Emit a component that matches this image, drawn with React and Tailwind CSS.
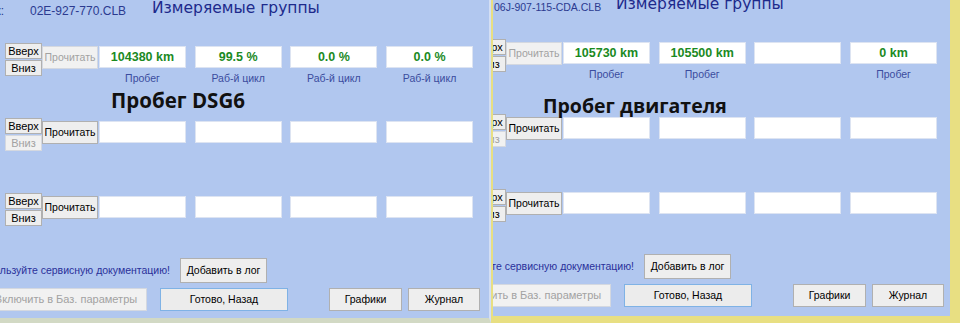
import clsx from "clsx";

const sans = "font-['Liberation_Sans',Arial,sans-serif]";

const panels = {
  dsg: {
    file: "02E-927-770.CLB",
    fileSize: "text-[12px]",
    note: "Пробег DSG6",
    values: ["104380 km", "99.5 %", "0.0 %", "0.0 %"],
    labels: ["Пробег", "Раб-й цикл", "Раб-й цикл", "Раб-й цикл"],
  },
  engine: {
    file: "06J-907-115-CDA.CLB",
    fileSize: "text-[10.5px]",
    note: "Пробег двигателя",
    values: ["105730 km", "105500 km", "", "0 km"],
    labels: ["Пробег", "Пробег", "", "Пробег"],
  },
};

function Btn({ children, disabled, focus, className }) {
  return (
    <button
      type="button"
      className={clsx(
        "flex shrink-0 items-center justify-center overflow-hidden whitespace-nowrap border text-[10.5px] leading-none",
        disabled
          ? "border-[#d4d8e0] bg-[#f1f1f1] text-[#a2a2a2]"
          : focus
            ? "border-[#7fb2e5] bg-[#ececec] text-black"
            : "border-[#b0b0b0] bg-[#eeeeee] text-black",
        className
      )}
    >
      {children}
    </button>
  );
}

function Group({ values = [], labels = [], readDisabled, downDisabled, className }) {
  return (
    <div className={clsx("flex", className)}>
      <div className="ml-[45px] flex w-[37px] flex-col">
        <Btn className="h-[16px] w-[37px] text-[11px]">Вверх</Btn>
        <Btn disabled={downDisabled} className="mt-[1px] h-[16px] w-[37px] text-[11px]">
          Вниз
        </Btn>
      </div>
      <Btn disabled={readDisabled} className="mt-[3px] h-[23px] w-[56px]">
        Прочитать
      </Btn>
      <div className="ml-[1px] mt-[3px] flex gap-x-[8.7px]">
        {[0, 1, 2, 3].map((i) => (
          <div key={i} className="flex w-[87px] flex-col items-center">
            <div className="flex h-[22px] w-[87px] items-center justify-center border border-[#dde4f2] bg-white text-[12.5px] font-bold text-[#1b8a1f]">
              {values[i]}
            </div>
            {labels[i] ? (
              <span className="mt-[4px] text-[10.5px] leading-[12px] text-[#3b4c9e]">{labels[i]}</span>
            ) : null}
          </div>
        ))}
      </div>
    </div>
  );
}

function Window({ data, className }) {
  return (
    <div className={clsx("w-[560px] shrink-0", sans, className)}>
      <div className="flex h-[43px] items-start">
        <div className="flex w-[44px] shrink-0 justify-end">
          <span className="mt-[5px] whitespace-nowrap text-[12px] leading-[12px] text-[#2b3a8f]">
            Файл меток:
          </span>
        </div>
        <span
          className={clsx(
            "ml-[26px] mt-[5px] w-[122px] shrink-0 whitespace-nowrap leading-[12px] text-[#2b3a8f]",
            data.fileSize
          )}
        >
          {data.file}
        </span>
        <span className="font-['DejaVu_Sans',sans-serif] text-[15.5px] leading-[16px] text-[#1d2a8c]">
          Измеряемые группы
        </span>
      </div>

      <Group className="h-[75px]" values={data.values} labels={data.labels} readDisabled />
      <Group className="h-[75px]" downDisabled />
      <Group className="h-[65px]" />

      <div className="flex h-[25px] items-center">
        <div className="flex w-[210px] shrink-0 justify-end">
          <span className="whitespace-nowrap text-[10.5px] text-[#2a309a]">
            Используйте сервисную документацию!
          </span>
        </div>
        <Btn className="ml-[10px] h-[25px] w-[87px]">Добавить в лог</Btn>
      </div>
      <div className="mt-[5px] flex h-[23px]">
        <Btn disabled className="ml-[25px] h-[23px] w-[162px] text-[11px]">
          Включить в Баз. параметры
        </Btn>
        <Btn focus className="ml-[13px] h-[23px] w-[128px]">
          Готово, Назад
        </Btn>
        <Btn className="ml-[41px] h-[23px] w-[73px]">Графики</Btn>
        <Btn className="ml-[6px] h-[23px] w-[72px]">Журнал</Btn>
      </div>
    </div>
  );
}

function Note({ children, className }) {
  return (
    <span
      className={clsx(
        "absolute whitespace-nowrap font-['Open_Sans',sans-serif] font-bold text-[#111111]",
        className
      )}
    >
      {children}
    </span>
  );
}

export default function App() {
  return (
    <div className="flex h-[323px] w-[960px] overflow-hidden bg-[#e8df82]">
      <div className="relative w-[491px] shrink-0 overflow-hidden border-r-2 border-b-[5px] border-r-[#d3def4] border-b-[#d2d9c4] bg-[#b1c7ef]">
        <Window data={panels.dsg} className="ml-[-40px]" />
        <Note className="left-[111px] top-[90px] text-[20.5px] leading-[21px]">{panels.dsg.note}</Note>
      </div>
      <div className="relative flex-1 overflow-hidden border-l-2 border-r-[10px] border-b-[7px] border-[#e8df82] bg-[#b1c7ef]">
        <Window data={panels.engine} className="ml-[-69px] mt-[-4px]" />
        <Note className="left-[50px] top-[96px] text-[19.5px] leading-[20px]">{panels.engine.note}</Note>
      </div>
    </div>
  );
}
